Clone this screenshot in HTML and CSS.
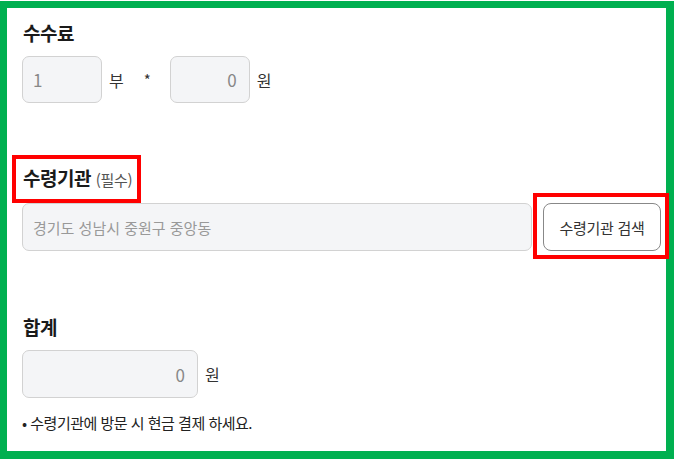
FILE: index.html
```html
<!DOCTYPE html>
<html lang="ko">
<head>
    <meta charset="UTF-8">
    <meta name="viewport" content="width=device-width, initial-scale=1.0">
    <title>수령기관 선택</title>
    <link rel="stylesheet" href="styles.css">
</head>
<body>
    <div class="frame">
        <section class="group">
            <h3 class="label">수수료</h3>
            <div class="row">
                <input class="field field-small field-left" type="text" value="1" readonly>
                <span class="unit">부</span>
                <span class="times">*</span>
                <input class="field field-small" type="text" value="0" readonly>
                <span class="unit">원</span>
            </div>
        </section>

        <section class="group group-agency">
            <h3 class="label mark mark-label">수령기관 <span class="required">(필수)</span></h3>
            <div class="row">
                <input class="field field-wide field-left" type="text" placeholder="경기도 성남시 중원구 중앙동" readonly>
                <span class="mark mark-button">
                    <button class="search-btn" type="button">수령기관 검색</button>
                </span>
            </div>
        </section>

        <section class="group group-total">
            <h3 class="label">합계</h3>
            <div class="row">
                <input class="field field-total" type="text" value="0" readonly>
                <span class="unit">원</span>
            </div>
            <p class="note">• 수령기관에 방문 시 현금 결제 하세요.</p>
        </section>
    </div>
</body>
</html>
```

FILE: styles.css
```css
* {
    box-sizing: border-box;
}

body {
    margin: 0;
    background: #fff;
    font-family: "Noto Sans CJK KR", "Noto Sans", sans-serif;
    color: #222;
}

.frame {
    margin-top: 1px;
    height: 458px;
    border: solid #00b050;
    border-width: 7px 8px 8px 7px;
    padding: 12px 0 0 15px;
}

.label {
    margin: 0 0 10px 1px;
    font-size: 19px;
    font-weight: 700;
    line-height: 26px;
    letter-spacing: -0.5px;
    color: #1a1a1a;
}

.required {
    font-size: 15px;
    font-weight: 400;
    color: #555;
    letter-spacing: -0.3px;
}

.row {
    display: flex;
    align-items: center;
}

.field {
    height: 48px;
    border: 1px solid #d2d2d2;
    border-radius: 7px;
    background: #f4f5f7;
    font-family: inherit;
    font-size: 17px;
    color: #888;
    text-align: right;
    padding: 0 12px;
    outline: none;
}

.field-left {
    text-align: left;
    padding: 0 10px;
}

.field::placeholder {
    color: #999;
}

.field-small {
    width: 80px;
    height: 47px;
}

.field-wide {
    width: 510px;
    font-size: 15px;
}

.field-total {
    width: 176px;
}

.unit {
    margin-left: 7px;
    font-size: 16px;
    color: #333;
}

.times {
    margin: 0 19px 0 20px;
    font-size: 15px;
    color: #333;
}

.group-agency {
    margin-top: 62px;
}

.group-total {
    margin-top: 63px;
}

.search-btn {
    margin-left: 11px;
    width: 118px;
    height: 48px;
    border: 1px solid #888;
    border-radius: 8px;
    background: #fff;
    font-family: inherit;
    font-size: 15px;
    color: #333;
    letter-spacing: -0.3px;
}

.note {
    margin: 14px 0 0;
    font-size: 15px;
    letter-spacing: -0.5px;
    color: #222;
}

/* red annotation boxes */
.mark {
    position: relative;
    display: inline-block;
}

.mark::after {
    content: "";
    position: absolute;
    border: 4px solid #f00;
    pointer-events: none;
}

.mark-label::after {
    left: -11px;
    right: -9px;
    top: -10px;
    bottom: -10px;
}

.mark-button::after {
    left: 1px;
    right: -8px;
    top: -10px;
    bottom: -8px;
}
```
